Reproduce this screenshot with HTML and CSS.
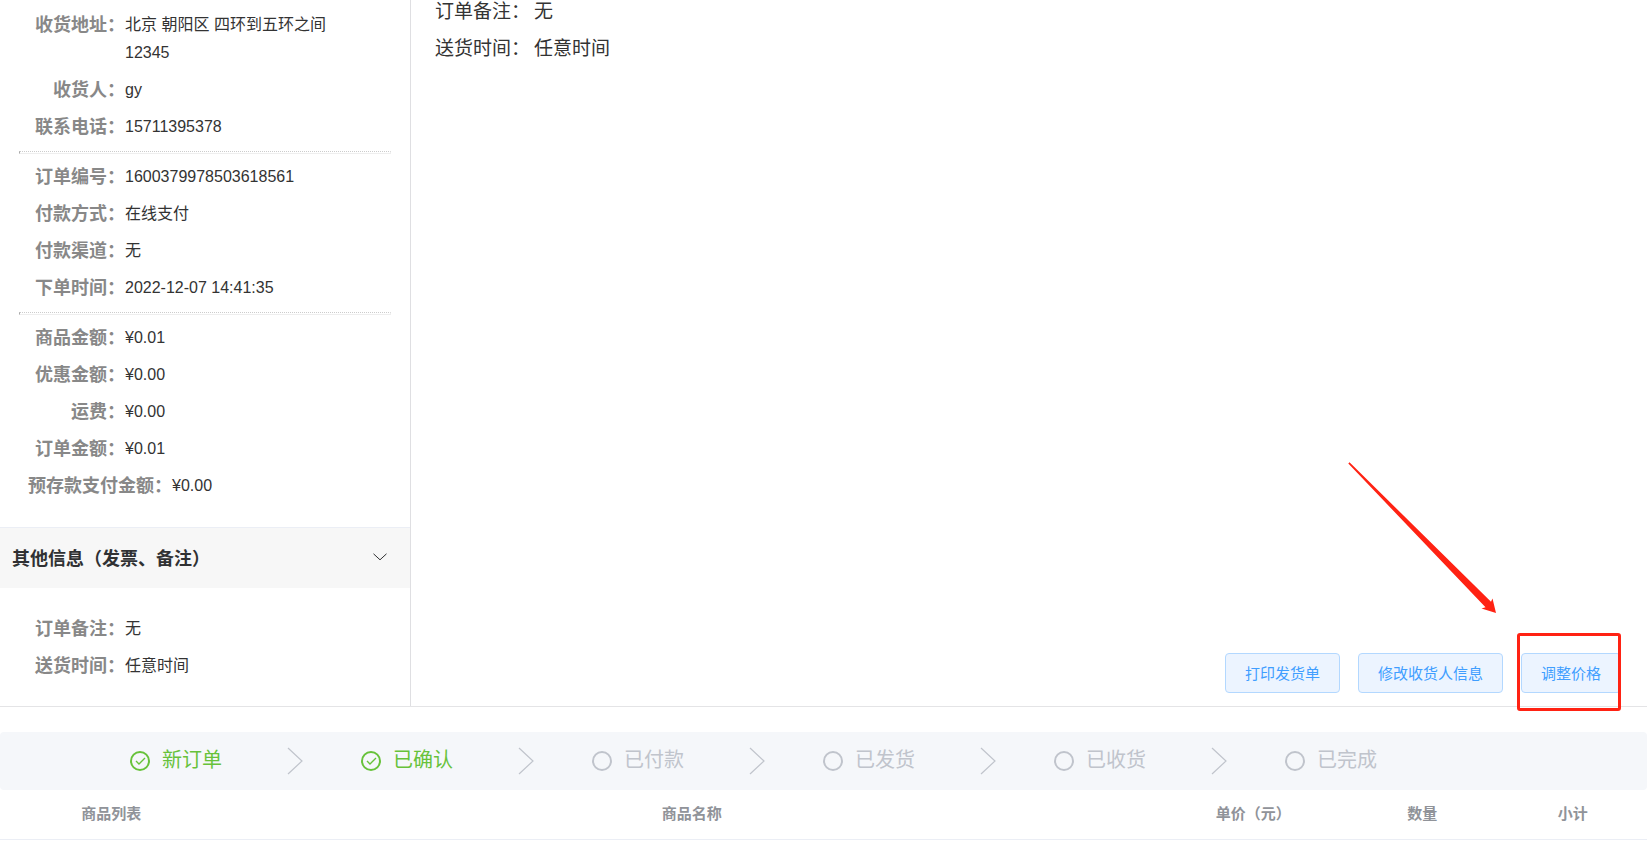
FILE: index.html
```html
<!DOCTYPE html>
<html lang="zh-CN">
<head>
    <meta charset="UTF-8">
    <meta name="viewport" content="width=device-width, initial-scale=1.0">
    <title>订单详情</title>
    <link rel="stylesheet" href="styles.css">
</head>
<body>
    <div class="order-detail">
        <div class="order-side">
            <div class="side-info">
                <dl class="info-list">
                    <div class="info-row"><dt>收货地址：</dt><dd>北京 朝阳区 四环到五环之间<br>12345</dd></div>
                    <div class="info-row"><dt>收货人：</dt><dd>gy</dd></div>
                    <div class="info-row"><dt>联系电话：</dt><dd>15711395378</dd></div>
                </dl>
                <hr class="divider">
                <dl class="info-list">
                    <div class="info-row"><dt>订单编号：</dt><dd>1600379978503618561</dd></div>
                    <div class="info-row"><dt>付款方式：</dt><dd>在线支付</dd></div>
                    <div class="info-row"><dt>付款渠道：</dt><dd>无</dd></div>
                    <div class="info-row"><dt>下单时间：</dt><dd>2022-12-07 14:41:35</dd></div>
                </dl>
                <hr class="divider">
                <dl class="info-list">
                    <div class="info-row"><dt>商品金额：</dt><dd>¥0.01</dd></div>
                    <div class="info-row"><dt>优惠金额：</dt><dd>¥0.00</dd></div>
                    <div class="info-row"><dt>运费：</dt><dd>¥0.00</dd></div>
                    <div class="info-row"><dt>订单金额：</dt><dd>¥0.01</dd></div>
                    <div class="info-row wide"><dt>预存款支付金额：</dt><dd>¥0.00</dd></div>
                </dl>
            </div>

            <button type="button" class="collapse-header">
                <span>其他信息（发票、备注）</span>
                <svg class="chevron" viewBox="0 0 14 8"><path d="M0.5 0.8 L7 6.8 L13.5 0.8"/></svg>
            </button>
            <div class="collapse-body">
                <dl class="info-list">
                    <div class="info-row"><dt>订单备注：</dt><dd>无</dd></div>
                    <div class="info-row"><dt>送货时间：</dt><dd>任意时间</dd></div>
                </dl>
            </div>
        </div>

        <div class="order-main">
            <dl class="main-list">
                <div class="main-row"><dt>订单备注：</dt><dd>无</dd></div>
                <div class="main-row"><dt>送货时间：</dt><dd>任意时间</dd></div>
            </dl>
            <div class="actions">
                <button type="button" class="btn">打印发货单</button>
                <button type="button" class="btn">修改收货人信息</button>
                <div class="marked">
                    <button type="button" class="btn">调整价格</button>
                    <svg class="arrow" viewBox="0 0 148 151">
                        <path d="M0.3 1.5 L1.5 0.3 L143 139.7 L144.5 136.5 L148 151 L133.5 146.5 L137.5 145.3 Z"/>
                    </svg>
                </div>
            </div>
        </div>
    </div>

    <ol class="steps">
        <li class="step done">
            <svg class="step-icon" viewBox="0 0 20 20"><circle cx="10" cy="10" r="9"/><path d="M6 10 L9 13 L15 7"/></svg>
            <span class="step-title">新订单</span>
            <svg class="step-arrow" viewBox="0 0 16 28"><path d="M1 1 L15 14 L1 27"/></svg>
        </li>
        <li class="step done">
            <svg class="step-icon" viewBox="0 0 20 20"><circle cx="10" cy="10" r="9"/><path d="M6 10 L9 13 L15 7"/></svg>
            <span class="step-title">已确认</span>
            <svg class="step-arrow" viewBox="0 0 16 28"><path d="M1 1 L15 14 L1 27"/></svg>
        </li>
        <li class="step">
            <svg class="step-icon" viewBox="0 0 20 20"><circle cx="10" cy="10" r="9"/></svg>
            <span class="step-title">已付款</span>
            <svg class="step-arrow" viewBox="0 0 16 28"><path d="M1 1 L15 14 L1 27"/></svg>
        </li>
        <li class="step">
            <svg class="step-icon" viewBox="0 0 20 20"><circle cx="10" cy="10" r="9"/></svg>
            <span class="step-title">已发货</span>
            <svg class="step-arrow" viewBox="0 0 16 28"><path d="M1 1 L15 14 L1 27"/></svg>
        </li>
        <li class="step">
            <svg class="step-icon" viewBox="0 0 20 20"><circle cx="10" cy="10" r="9"/></svg>
            <span class="step-title">已收货</span>
            <svg class="step-arrow" viewBox="0 0 16 28"><path d="M1 1 L15 14 L1 27"/></svg>
        </li>
        <li class="step">
            <svg class="step-icon" viewBox="0 0 20 20"><circle cx="10" cy="10" r="9"/></svg>
            <span class="step-title">已完成</span>
        </li>
    </ol>

    <table class="goods">
        <thead>
            <tr>
                <th class="col-list">商品列表</th>
                <th class="col-name">商品名称</th>
                <th class="col-price">单价（元）</th>
                <th class="col-num">数量</th>
                <th class="col-total">小计</th>
            </tr>
        </thead>
    </table>
</body>
</html>
```

FILE: styles.css
```css
* {
    margin: 0;
    padding: 0;
    box-sizing: border-box;
}

body {
    background-color: #fff;
    color: #333;
    font-family: "Liberation Sans", "Noto Sans CJK SC", sans-serif;
    font-size: 16px;
}

button {
    font-family: inherit;
    cursor: pointer;
}

.order-detail {
    display: flex;
    border-bottom: 1px solid #e4e4e6;
}

/* left column */
.order-side {
    width: 411px;
    flex-shrink: 0;
    border-right: 1px solid #dfdfe2;
}

.side-info {
    padding: 11px 19px 18px;
}

.info-row {
    display: flex;
    line-height: 28px;
    margin-bottom: 9px;
}

.info-row dt {
    width: 106px;
    flex-shrink: 0;
    text-align: right;
    font-size: 18px;
    font-weight: bold;
    color: #888;
}

.info-row.wide dt {
    width: auto;
    padding-left: 9px;
}

.divider {
    height: 3px;
    margin: 10px 0 9px;
    border: 1px solid #eee;
    border-top: 1px dotted #ccc;
    border-left-color: #aaa;
}

.collapse-header {
    display: flex;
    justify-content: space-between;
    align-items: center;
    width: 100%;
    height: 61px;
    padding: 0 23px 2px 12px;
    border: 0;
    border-top: 1px solid #ebeef5;
    background-color: #f7f7f7;
    color: #303133;
    font-size: 18px;
    font-weight: bold;
}

.chevron {
    width: 14px;
    height: 8px;
    fill: none;
    stroke: #303133;
}

.collapse-body {
    padding: 27px 19px 17px;
}

/* right column */
.order-main {
    flex: 1;
    display: flex;
    flex-direction: column;
    justify-content: space-between;
    padding: 1px 26px 13px 24px;
}

.main-row {
    display: flex;
    gap: 4px;
    font-size: 19px;
    line-height: 22px;
    margin-bottom: 15px;
}

.actions {
    display: flex;
    justify-content: flex-end;
    gap: 18px;
}

.btn {
    height: 40px;
    padding: 0 19px 2px;
    border: 1px solid #b3d8ff;
    border-radius: 4px;
    background-color: #ecf4ff;
    color: #409eff;
    font-size: 15px;
}

.marked {
    position: relative;
}

.marked::after {
    content: "";
    position: absolute;
    top: -20px;
    right: 0;
    bottom: -18px;
    left: -4px;
    border: 3px solid #ff2213;
    border-radius: 3px;
    pointer-events: none;
}

.arrow {
    position: absolute;
    right: 125px;
    bottom: 80px;
    width: 148px;
    height: 151px;
    fill: #ff2213;
}

/* order progress */
.steps {
    display: grid;
    grid-template-columns: repeat(6, 1fr);
    margin-top: 25px;
    padding: 0 131px 0 130px;
    height: 58px;
    border-radius: 4px;
    background-color: #f5f7fa;
    list-style: none;
}

.step {
    display: flex;
    align-items: center;
    color: #c0c4cc;
    font-size: 20px;
}

.step.done {
    color: #67c23a;
}

.step-icon {
    width: 20px;
    height: 20px;
    margin-right: 12px;
    fill: none;
    stroke: currentColor;
    stroke-width: 2;
}

.step-icon path {
    stroke-width: 1.4;
}

.step-title {
    line-height: 28px;
    padding-bottom: 2px;
}

.step-arrow {
    width: 16px;
    height: 28px;
    margin: 0 58px 0 auto;
    fill: none;
    stroke: #c0c4cc;
    stroke-width: 1.2;
}

/* goods table */
.goods {
    width: 100%;
    border-collapse: collapse;
    table-layout: fixed;
}

.goods th {
    height: 49px;
    padding-bottom: 3px;
    border-bottom: 1px solid #ebeef5;
    color: #909399;
    font-size: 15px;
    text-align: center;
}

.col-list {
    width: 13.5%;
}

.col-name {
    width: 57%;
}

.col-price {
    width: 11.2%;
}

.col-num {
    width: 9.3%;
}

.col-total {
    width: 9%;
}
```
